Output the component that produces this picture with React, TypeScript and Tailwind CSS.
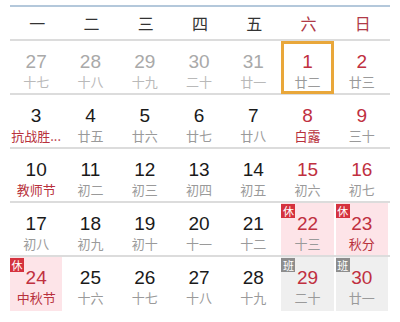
type Day = {
  d: string;
  l: string;
  muted?: boolean;
  red?: boolean;
  fest?: boolean;
  badge?: "休" | "班";
  selected?: boolean;
};

const weekdays = ["一", "二", "三", "四", "五", "六", "日"];

const rows: Day[][] = [
  [
    { d: "27", l: "十七", muted: true },
    { d: "28", l: "十八", muted: true },
    { d: "29", l: "十九", muted: true },
    { d: "30", l: "二十", muted: true },
    { d: "31", l: "廿一", muted: true },
    { d: "1", l: "廿二", red: true, selected: true },
    { d: "2", l: "廿三", red: true },
  ],
  [
    { d: "3", l: "抗战胜...", fest: true },
    { d: "4", l: "廿五" },
    { d: "5", l: "廿六" },
    { d: "6", l: "廿七" },
    { d: "7", l: "廿八" },
    { d: "8", l: "白露", red: true, fest: true },
    { d: "9", l: "三十", red: true },
  ],
  [
    { d: "10", l: "教师节", fest: true },
    { d: "11", l: "初二" },
    { d: "12", l: "初三" },
    { d: "13", l: "初四" },
    { d: "14", l: "初五" },
    { d: "15", l: "初六", red: true },
    { d: "16", l: "初七", red: true },
  ],
  [
    { d: "17", l: "初八" },
    { d: "18", l: "初九" },
    { d: "19", l: "初十" },
    { d: "20", l: "十一" },
    { d: "21", l: "十二" },
    { d: "22", l: "十三", red: true, badge: "休" },
    { d: "23", l: "秋分", red: true, fest: true, badge: "休" },
  ],
  [
    { d: "24", l: "中秋节", fest: true, badge: "休" },
    { d: "25", l: "十六" },
    { d: "26", l: "十七" },
    { d: "27", l: "十八" },
    { d: "28", l: "十九" },
    { d: "29", l: "二十", red: true, badge: "班" },
    { d: "30", l: "廿一", red: true, badge: "班" },
  ],
];

const Cell = ({ day }: { day: Day }) => {
  const bg =
    day.badge === "休"
      ? "bg-[#fde4e8]"
      : day.badge === "班"
        ? "bg-[#efefef]"
        : "";
  const border = day.selected ? "border-[3px] border-[#e9a73a]" : "";
  const numColor = day.muted
    ? "text-[#a9a9a9]"
    : day.red || day.badge
      ? "text-[#c0303f]"
      : "text-[#1a1a1a]";
  const lunarColor = day.fest
    ? "text-[#b8313c]"
    : day.muted
      ? "text-[#b9b9b9]"
      : "text-[#9a9a9a]";

  return (
    <div className="pr-[2px] h-full">
      <div
        className={`relative h-full flex flex-col items-center ${bg} ${border} ${day.selected ? "pt-[8px]" : "pt-[11px]"}`}
      >
        {day.badge && (
          <span
            className={`absolute left-0 top-[1px] w-[14px] h-[14px] flex items-center justify-center text-[11px] leading-none text-white ${day.badge === "休" ? "bg-[#d5323e]" : "bg-[#8d8d8d]"}`}
          >
            {day.badge}
          </span>
        )}
        <span
          className={`text-[19px] leading-[20px] ${numColor}`}
          style={{ fontFamily: '"Liberation Sans", Arial, sans-serif' }}
        >
          {day.d}
        </span>
        <span className={`mt-[1px] text-[13px] leading-[18px] ${lunarColor}`}>
          {day.l}
        </span>
      </div>
    </div>
  );
};

export default function App() {
  return (
    <div
      className="w-[400px] h-[322px] bg-white pt-[5px] px-[10px]"
      style={{ fontFamily: '"Noto Sans CJK SC", "Liberation Sans", sans-serif' }}
    >
      <div className="grid grid-cols-7 border-t-2 border-[#b4c8db] border-b-2 border-b-[#dcdcdc] h-[36px]">
        {weekdays.map((w, i) => (
          <div
            key={w}
            className={`flex items-center justify-center text-[16px] ${i >= 5 ? "text-[#b03a48]" : "text-[#333333]"}`}
          >
            {w}
          </div>
        ))}
      </div>
      {rows.map((row, ri) => (
        <div
          key={ri}
          className={`grid grid-cols-7 h-[54px] ${ri < rows.length - 1 ? "border-b-2 border-[#dcdcdc]" : ""}`}
        >
          {row.map((day, di) => (
            <Cell key={di} day={day} />
          ))}
        </div>
      ))}
    </div>
  );
}
